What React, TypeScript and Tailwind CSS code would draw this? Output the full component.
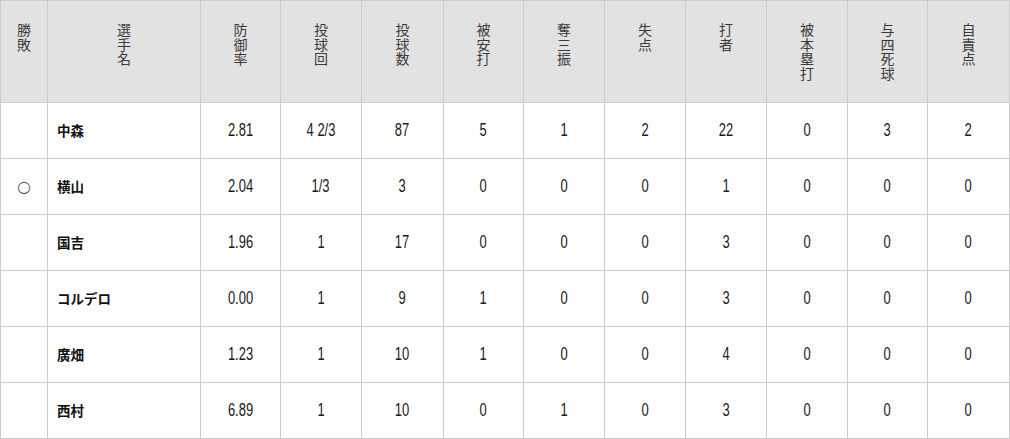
const headers = [
  "勝敗",
  "選手名",
  "防御率",
  "投球回",
  "投球数",
  "被安打",
  "奪三振",
  "失点",
  "打者",
  "被本塁打",
  "与四死球",
  "自責点",
];

type PitcherRow = {
  result: string;
  name: string;
  stats: string[];
};

const rows: PitcherRow[] = [
  { result: "", name: "中森", stats: ["2.81", "4 2/3", "87", "5", "1", "2", "22", "0", "3", "2"] },
  { result: "○", name: "横山", stats: ["2.04", "1/3", "3", "0", "0", "0", "1", "0", "0", "0"] },
  { result: "", name: "国吉", stats: ["1.96", "1", "17", "0", "0", "0", "3", "0", "0", "0"] },
  { result: "", name: "コルデロ", stats: ["0.00", "1", "9", "1", "0", "0", "3", "0", "0", "0"] },
  { result: "", name: "廣畑", stats: ["1.23", "1", "10", "1", "0", "0", "4", "0", "0", "0"] },
  { result: "", name: "西村", stats: ["6.89", "1", "10", "0", "1", "0", "3", "0", "0", "0"] },
];

const cjk = "font-['Noto_Sans_CJK_JP',sans-serif]";
const num = "font-['Liberation_Sans',Arial,sans-serif]";

export default function App() {
  return (
    <div className="w-[1010px] h-[439px] overflow-hidden bg-white">
      <div className="grid grid-cols-[47px_153px_80px_81px_82px_80px_81px_81px_81px_81px_80px_82px] grid-rows-[102px_repeat(6,56px)] border-l border-t border-[#cccccc]">
        {headers.map((h) => (
          <div
            key={h}
            className={`border-r border-b border-[#cccccc] bg-[#e2e2e2] pt-[21px] text-center whitespace-pre-line ${cjk} text-[14px] leading-[14.5px] text-[#3a3a3a]`}
          >
            {h.split("").join("\n")}
          </div>
        ))}
        {rows.map((row) => (
          <div key={row.name} className="contents">
            <div className="flex items-center justify-center border-r border-b border-[#cccccc] text-[#555] text-[16px] font-['DejaVu_Sans',sans-serif]">
              {row.result}
            </div>
            <div className={`flex items-center border-r border-b border-[#cccccc] pl-[9px] ${cjk} text-[13.5px] font-bold text-[#111]`}>
              {row.name}
            </div>
            {row.stats.map((s, i) => (
              <div
                key={i}
                className={`flex items-center justify-center border-r border-b border-[#cccccc] ${num} text-[18px] text-[#1a1a1a]`}
              >
                <span className="inline-block scale-x-[0.72]">{s}</span>
              </div>
            ))}
          </div>
        ))}
      </div>
    </div>
  );
}
